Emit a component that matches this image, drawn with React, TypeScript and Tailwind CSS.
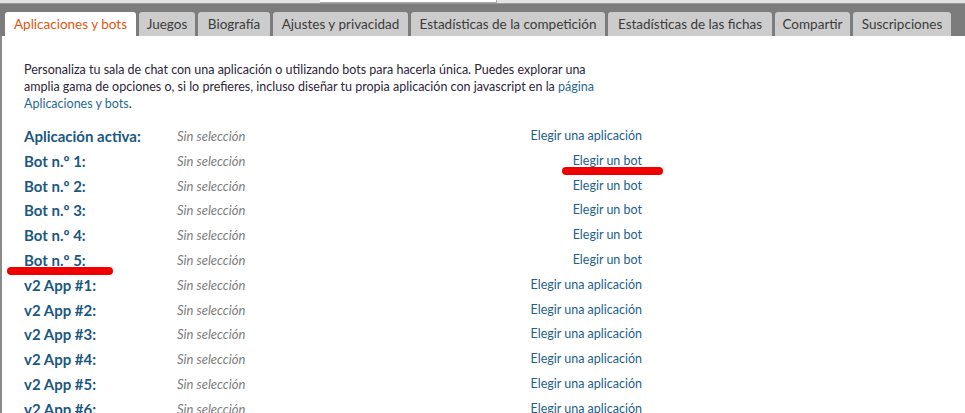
const FONT = "font-['Lato','Liberation_Sans',sans-serif]";

const TABS = [
  { label: "Aplicaciones y bots", w: 131, active: true },
  { label: "Juegos", w: 56 },
  { label: "Biografía", w: 72 },
  { label: "Ajustes y privacidad", w: 135 },
  { label: "Estadísticas de la competición", w: 194 },
  { label: "Estadísticas de las fichas", w: 164 },
  { label: "Compartir", w: 75 },
  { label: "Suscripciones", w: 98 },
];

type Row = { label: string; action: string };

const ROWS: Row[] = [
  { label: "Aplicación activa:", action: "Elegir una aplicación" },
  { label: "Bot n.º 1:", action: "Elegir un bot" },
  { label: "Bot n.º 2:", action: "Elegir un bot" },
  { label: "Bot n.º 3:", action: "Elegir un bot" },
  { label: "Bot n.º 4:", action: "Elegir un bot" },
  { label: "Bot n.º 5:", action: "Elegir un bot" },
  { label: "v2 App #1:", action: "Elegir una aplicación" },
  { label: "v2 App #2:", action: "Elegir una aplicación" },
  { label: "v2 App #3:", action: "Elegir una aplicación" },
  { label: "v2 App #4:", action: "Elegir una aplicación" },
  { label: "v2 App #5:", action: "Elegir una aplicación" },
  { label: "v2 App #6:", action: "Elegir una aplicación" },
];

function TabBar() {
  return (
    <div className="relative">
      {/* strip of the page header above the tabs */}
      <div className="flex h-[3px] bg-[#e3e3e3]">
        <div className="ml-[320px] w-[177px] border-b border-r border-[#a8a8a8] bg-white" />
      </div>
      <div className="flex h-[33px] items-end gap-[3px] border-t border-[#9a9a9a] bg-[#7c7c7c] pl-[5px]">
        {TABS.map((t) => (
          <div
            key={t.label}
            style={{ width: t.w }}
            className={`flex h-[24px] items-center justify-center whitespace-nowrap rounded-t-[3px] text-[13.5px] ${
              t.active ? "bg-white text-[#e5540e]" : "bg-[#cccccc] text-[#3b3b3b]"
            }`}
          >
            {t.label}
          </div>
        ))}
      </div>
    </div>
  );
}

export default function App() {
  return (
    <div className={`h-[413px] w-[965px] overflow-hidden bg-white ${FONT}`}>
      <TabBar />
      <div className="relative h-[377px] border-l-[2px] border-[#8a8a8a] pl-[22px] pt-[25px]">
        <p className="whitespace-nowrap text-[12.5px] leading-[17px] text-[#2e2638]">
          Personaliza tu sala de chat con una aplicación o utilizando bots para hacerla única. Puedes explorar una
          <br />
          amplia gama de opciones o, si lo prefieres, incluso diseñar tu propia aplicación con javascript en la{" "}
          <span className="text-[#1f6a92]">página</span>
          <br />
          <span className="text-[#1f6a92]">Aplicaciones y bots</span>.
        </p>

        <div className="mt-[14px] grid w-[618px] grid-cols-[153px_1fr_auto]">
          {ROWS.map((r) => (
            <div key={r.label} className="contents">
              <div className="h-[24.8px] whitespace-nowrap text-[15px] font-bold leading-[20px] text-[#1b587f]">
                {r.label}
              </div>
              <div className="h-[24.8px] whitespace-nowrap text-[13px] italic leading-[20px] text-[#7d7d7d]">
                Sin selección
              </div>
              <div className="h-[24.8px] whitespace-nowrap text-right text-[12.5px] leading-[20px] text-[#245f8a]">
                {r.action}
              </div>
            </div>
          ))}
        </div>

        {/* red marker strokes drawn over the screenshot */}
        <div className="absolute left-[560px] top-[131px] h-[8px] w-[101px] rounded-full bg-[#f00000]" />
        <div className="absolute left-[5px] top-[231px] h-[8px] w-[106px] rounded-full bg-[#f00000]" />
      </div>
    </div>
  );
}
